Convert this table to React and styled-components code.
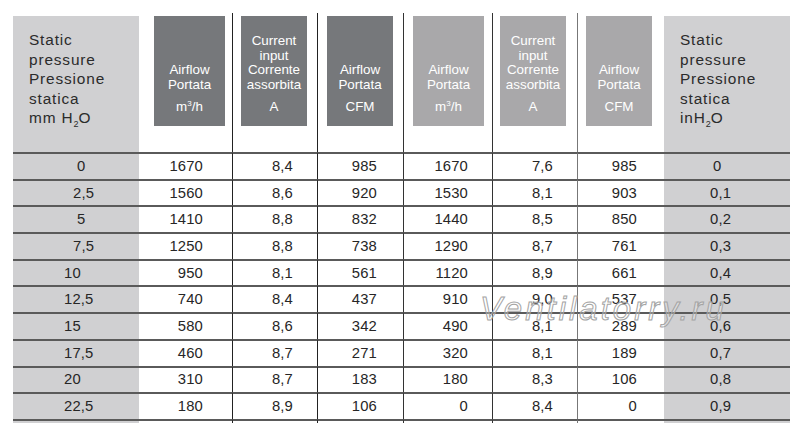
import React from "react";
import styled, { createGlobalStyle } from "styled-components";

const Global = createGlobalStyle`
  html, body { margin: 0; padding: 0; background: #ffffff; }
  body { font-family: "Liberation Sans", Arial, sans-serif; }
`;

const Page = styled.div`
  position: relative;
  width: 800px;
  height: 435px;
  box-sizing: border-box;
  padding: 13px 10px 0 13px;
  overflow: hidden;
`;

const Table = styled.div`
  display: grid;
  grid-template-columns: 126px 93px 85px 86px 89px 85px 87px 126px;
  grid-template-rows: 139px repeat(10, 26.7px) 4px;
`;

const HeaderGray = styled.div`
  margin-top: 3px;
  background: #d0d0d2;
  padding: 14px 0 0 16px;
  color: #2b2b2b;
  font-size: 15.4px;
  line-height: 19.6px;
  letter-spacing: 0.85px;
`;

const HeaderCell = styled.div`
  display: flex;
  align-items: flex-start;
  border-left: ${(p) => (p.$line ? `1px solid ${p.$line}` : "none")};
`;

const HeadBox = styled.div`
  flex: 1;
  margin: 3px ${(p) => p.$mr}px 0 ${(p) => p.$ml}px;
  height: 110px;
  box-sizing: border-box;
  background: ${(p) => (p.$tone === "dark" ? "#76787b" : "#a9a8aa")};
  color: #ffffff;
  display: flex;
  flex-direction: column;
  justify-content: flex-end;
  align-items: center;
  text-align: center;
  padding-bottom: 12px;
  font-size: 13.4px;
  line-height: 14.5px;
`;

const Unit = styled.div`
  margin-top: 7.5px;
`;

const Sup = styled.sup`
  font-size: 8px;
  line-height: 0;
  vertical-align: 5px;
`;

const Sub = styled.sub`
  font-size: 9px;
  line-height: 0;
  vertical-align: -4px;
  letter-spacing: 0;
`;

const Cell = styled.div`
  box-sizing: border-box;
  border-top: 2px solid #5a5a5a;
  border-left: ${(p) => (p.$line ? `1px solid ${p.$line}` : "none")};
  background: ${(p) => (p.$gray ? "#d0d0d2" : "transparent")};
  display: flex;
  align-items: center;
  justify-content: ${(p) => (p.$align === "right" ? "flex-end" : "flex-start")};
  padding-left: ${(p) => p.$pl || 0}px;
  padding-right: ${(p) => p.$pr || 0}px;
  color: #262626;
  font-size: 14.8px;
  letter-spacing: 0.15px;
  line-height: 1;
`;

const FootCell = styled.div`
  box-sizing: border-box;
  border-top: 2px solid #5a5a5a;
  border-left: ${(p) => (p.$line ? `1px solid ${p.$line}` : "none")};
  background: ${(p) => (p.$gray ? "#d0d0d2" : "transparent")};
`;

const Watermark = styled.div`
  position: absolute;
  left: 480px;
  top: 292px;
  font-size: 33px;
  line-height: 33px;
  font-style: italic;
  letter-spacing: 3px;
  color: rgba(255, 255, 255, 0.25);
  -webkit-text-stroke: 1px #a4a4a4;
  white-space: nowrap;
  pointer-events: none;
`;

const rows = [
  ["0", "1670", "8,4", "985", "1670", "7,6", "985", "0"],
  ["2,5", "1560", "8,6", "920", "1530", "8,1", "903", "0,1"],
  ["5", "1410", "8,8", "832", "1440", "8,5", "850", "0,2"],
  ["7,5", "1250", "8,8", "738", "1290", "8,7", "761", "0,3"],
  ["10", "950", "8,1", "561", "1120", "8,9", "661", "0,4"],
  ["12,5", "740", "8,4", "437", "910", "9,0", "537", "0,5"],
  ["15", "580", "8,6", "342", "490", "8,1", "289", "0,6"],
  ["17,5", "460", "8,7", "271", "320", "8,1", "189", "0,7"],
  ["20", "310", "8,7", "183", "180", "8,3", "106", "0,8"],
  ["22,5", "180", "8,9", "106", "0", "8,4", "0", "0,9"],
];

const cols = [
  { gray: true },
  { line: null, pr: 29, tone: "dark", ml: 15, mr: 7, kind: "m3" },
  { line: "#222", pr: 24, tone: "dark", ml: 8, mr: 10, kind: "A" },
  { line: "#222", pr: 26, tone: "dark", ml: 9, mr: 10, kind: "CFM" },
  { line: "#333", pr: 24, tone: "light", ml: 9, mr: 8, kind: "m3" },
  { line: "#333", pr: 24, tone: "light", ml: 7, mr: 11, kind: "A" },
  { line: "#777", pr: 27, tone: "light", ml: 8, mr: 12, kind: "CFM" },
  { gray: true },
];

const leftPad = (v) => {
  const int = v.split(",")[0];
  if (int.length >= 2) return 51;
  if (v.includes(",")) return 60;
  return 64;
};

const rightPad = (v) => (v === "0" ? 49 : 46);

function HeadContent({ kind }) {
  if (kind === "A") {
    return (
      <>
        <div>Current</div>
        <div>input</div>
        <div>Corrente</div>
        <div>assorbita</div>
        <Unit>A</Unit>
      </>
    );
  }
  return (
    <>
      <div>Airflow</div>
      <div>Portata</div>
      {kind === "m3" ? (
        <Unit>
          m<Sup>3</Sup>/h
        </Unit>
      ) : (
        <Unit>CFM</Unit>
      )}
    </>
  );
}

export default function App() {
  return (
    <>
      <Global />
      <Page>
        <Table>
          <HeaderGray>
            Static
            <br />
            pressure
            <br />
            Pressione
            <br />
            statica
            <br />
            mm H<Sub>2</Sub>O
          </HeaderGray>
          {cols.slice(1, 7).map((c, i) => (
            <HeaderCell key={i} $line={c.line}>
              <HeadBox $tone={c.tone} $ml={c.ml} $mr={c.mr}>
                <HeadContent kind={c.kind} />
              </HeadBox>
            </HeaderCell>
          ))}
          <HeaderGray>
            Static
            <br />
            pressure
            <br />
            Pressione
            <br />
            statica
            <br />
            inH<Sub>2</Sub>O
          </HeaderGray>

          {rows.map((r, ri) =>
            r.map((v, ci) => {
              if (ci === 0)
                return (
                  <Cell key={`${ri}-${ci}`} $gray $pl={leftPad(v)}>
                    {v}
                  </Cell>
                );
              if (ci === 7)
                return (
                  <Cell key={`${ri}-${ci}`} $gray $pl={rightPad(v)}>
                    {v}
                  </Cell>
                );
              const c = cols[ci];
              return (
                <Cell key={`${ri}-${ci}`} $line={c.line} $align="right" $pr={c.pr}>
                  {v}
                </Cell>
              );
            })
          )}

          {cols.map((c, i) => (
            <FootCell key={`f${i}`} $gray={c.gray} $line={c.line} />
          ))}
        </Table>
        <Watermark>Ventilatorry.ru</Watermark>
      </Page>
    </>
  );
}
